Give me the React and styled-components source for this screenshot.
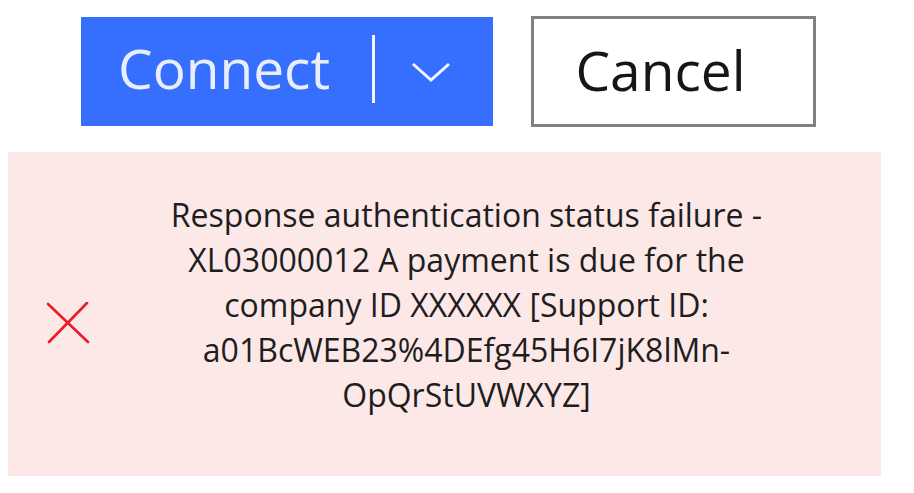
import React from "react";
import styled, { createGlobalStyle } from "styled-components";

const GlobalStyle = createGlobalStyle`
  body {
    margin: 8px;
    background: #ffffff;
    font-family: "Open Sans", "Noto Sans", sans-serif;
  }
`;

const Page = styled.div`
  display: flex;
  flex-direction: column;
  gap: 25px;
`;

const ButtonRow = styled.div`
  display: flex;
  align-items: center;
  padding: 8px 0 0 73px;
  gap: 38px;
`;

const SplitButton = styled.div`
  width: 412px;
  height: 109px;
  background: #366ffd;
  display: flex;
  align-items: center;
  box-sizing: border-box;
  padding-left: 37px;
`;

const MainAction = styled.button`
  border: none;
  background: none;
  padding: 0;
  font-family: inherit;
  font-size: 55px;
  color: #e8eefc;
  line-height: 1;
  margin-top: -9px;
  cursor: pointer;
`;

const Divider = styled.span`
  width: 3px;
  height: 68px;
  background: #f2f5fe;
  margin-left: 42px;
  margin-top: -6px;
`;

const MenuToggle = styled.button`
  border: none;
  background: none;
  padding: 0;
  margin-left: 36px;
  display: flex;
  align-items: center;
  cursor: pointer;
`;

const CancelButton = styled.button`
  width: 285px;
  height: 111px;
  box-sizing: border-box;
  border: 3px solid #808080;
  background: #ffffff;
  font-family: inherit;
  font-size: 55px;
  color: #161616;
  padding: 0 26px 4px 0;
  cursor: pointer;
`;

const Alert = styled.div`
  width: 873px;
  height: 324px;
  background: #fde8e8;
  display: flex;
  align-items: center;
  box-sizing: border-box;
  padding-left: 38px;
`;

const IconBox = styled.div`
  width: 44px;
  height: 42px;
  display: flex;
  margin-top: 18px;
`;

const Message = styled.p`
  flex: 1;
  margin: 0 38px 20px 0;
  text-align: center;
  font-size: 32px;
  line-height: 45px;
  color: #1e1e1e;
`;

const Line = styled.span`
  display: block;
  white-space: nowrap;
`;

const lines = [
  "Response authentication status failure -",
  "XL03000012 A payment is due for the",
  "company ID XXXXXX [Support ID:",
  "a01BcWEB23%4DEfg45H6I7jK8lMn-",
  "OpQrStUVWXYZ]",
];

export default function App() {
  return (
    <>
      <GlobalStyle />
      <Page>
        <ButtonRow>
          <SplitButton>
            <MainAction>Connect</MainAction>
            <Divider />
            <MenuToggle aria-label="More options">
              <svg width="40" height="22" viewBox="0 0 40 22">
                <path
                  d="M2 3 L20 19 L38 3"
                  fill="none"
                  stroke="#f4f7ff"
                  strokeWidth="3"
                />
              </svg>
            </MenuToggle>
          </SplitButton>
          <CancelButton>Cancel</CancelButton>
        </ButtonRow>
        <Alert>
          <IconBox>
            <svg width="44" height="42" viewBox="0 0 44 42">
              <path
                d="M2 2 L42 40 M41 1 L3 40"
                stroke="#ec1b24"
                strokeWidth="2.6"
                strokeLinecap="round"
              />
            </svg>
          </IconBox>
          <Message>
            {lines.map((l) => (
              <Line key={l}>{l}</Line>
            ))}
          </Message>
        </Alert>
      </Page>
    </>
  );
}
